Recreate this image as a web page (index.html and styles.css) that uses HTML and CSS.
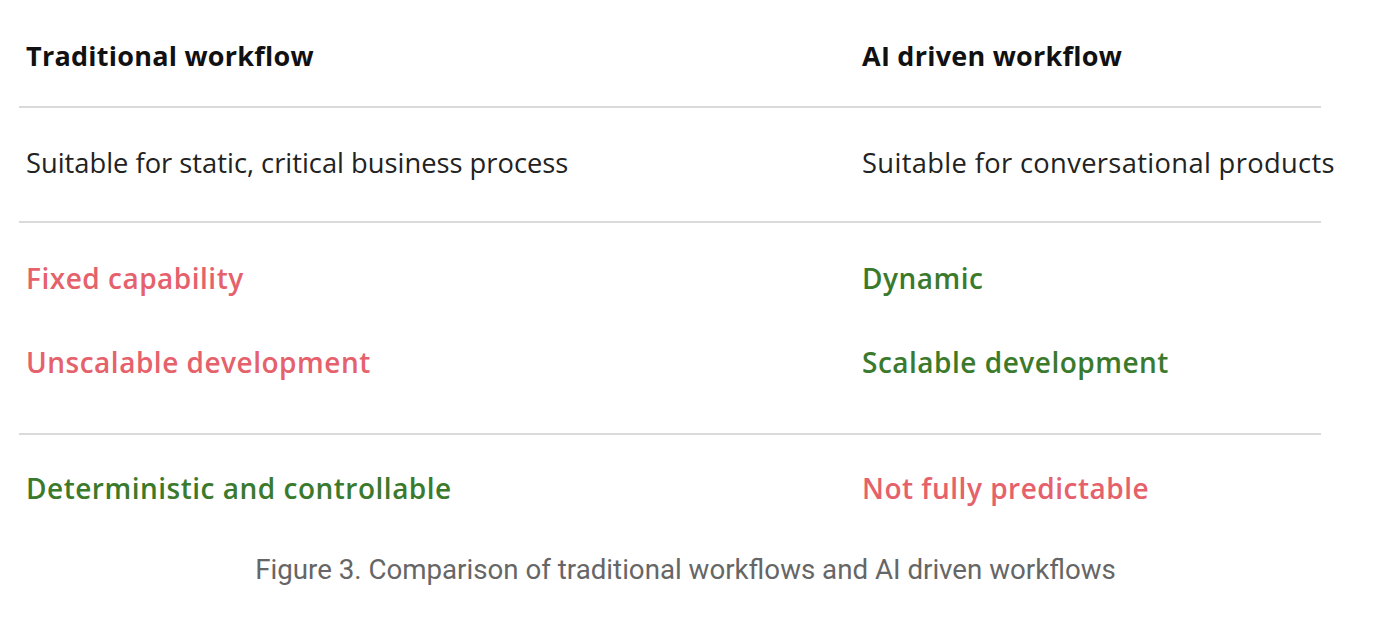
FILE: index.html
```html
<!DOCTYPE html>
<html>
<head>
<meta charset="utf-8">
<link rel="stylesheet" href="styles.css">
</head>
<body>
<div class="figure">
  <div class="table">
    <div class="row head">
      <div class="cell">Traditional workflow</div>
      <div class="cell">AI driven workflow</div>
    </div>
    <div class="row use">
      <div class="cell">Suitable for static, critical business process</div>
      <div class="cell">Suitable for conversational products</div>
    </div>
    <div class="row traits">
      <div class="cell stack">
        <span class="bad">Fixed capability</span>
        <span class="bad">Unscalable development</span>
      </div>
      <div class="cell stack">
        <span class="good">Dynamic</span>
        <span class="good">Scalable development</span>
      </div>
    </div>
    <div class="row last">
      <div class="cell"><span class="good">Deterministic and controllable</span></div>
      <div class="cell"><span class="bad">Not fully predictable</span></div>
    </div>
  </div>
  <p class="caption">Figure 3. Comparison of traditional workflows and AI driven workflows</p>
</div>
</body>
</html>
```

FILE: styles.css
```css
html, body {
  margin: 0;
  padding: 0;
  background: #ffffff;
}
body {
  font-family: "Open Sans", "Liberation Sans", sans-serif;
  color: #202124;
}
.figure {
  width: 1392px;
  height: 620px;
  overflow: hidden;
}
.table {
  margin-left: 19px;
  width: 1302px;
}
.row {
  display: grid;
  grid-template-columns: 843px 459px;
  border-bottom: 2px solid #dadada;
  white-space: nowrap;
}
.cell {
  padding-left: 7px;
  overflow: visible;
}
.row .cell:nth-child(2) {
  padding-left: 0;
}
.head {
  height: 106px;
  align-items: center;
  font-size: 27px;
  letter-spacing: 0.25px;
  font-weight: 700;
  color: #111111;
}
.head .cell {
  margin-top: 4px;
}
.use {
  height: 113px;
  align-items: center;
  font-size: 27.3px;
  color: #222222;
}
.use .cell {
  margin-top: -4px;
}
.use .cell:nth-child(2) {
  letter-spacing: 0.35px;
}
.traits {
  height: 210px;
  font-size: 28px;
  letter-spacing: 0.5px;
  font-weight: 600;
}
.stack {
  display: flex;
  flex-direction: column;
  gap: 46px;
  padding-top: 36px;
}
.last {
  border-bottom: none;
  height: 106px;
  align-items: center;
  font-size: 28px;
  letter-spacing: 0.5px;
  font-weight: 600;
}
.bad {
  color: #e5616b;
}
.good {
  color: #3b7a2c;
}
.caption {
  margin: 12px 0 0;
  text-align: center;
  font-family: Roboto, "Liberation Sans", sans-serif;
  font-size: 27.7px;
  color: #666666;
  width: 1371px;
}
```
